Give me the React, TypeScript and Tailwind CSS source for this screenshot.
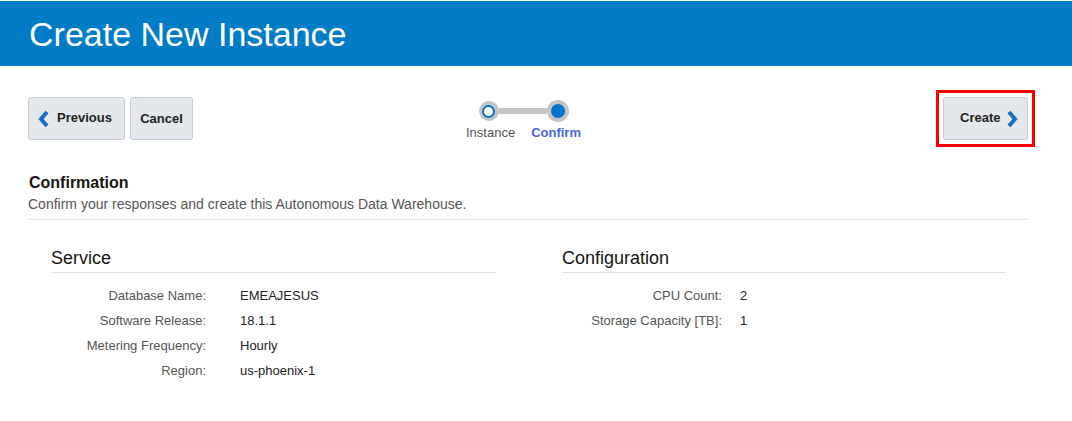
import React from "react";

function ChevLeft() {
  return (
    <svg width="11" height="18" viewBox="0 0 11 18">
      <path d="M9 2 L3 9 L9 16" fill="none" stroke="#1a6fc4" strokeWidth="4" strokeLinejoin="miter" />
    </svg>
  );
}
function ChevRight() {
  return (
    <svg width="11" height="18" viewBox="0 0 11 18">
      <path d="M2 2 L8 9 L2 16" fill="none" stroke="#1a6fc4" strokeWidth="4" strokeLinejoin="miter" />
    </svg>
  );
}

function Row({ label, value, labelW }: { label: string; value: string; labelW: string }) {
  return (
    <div className="flex h-[25px] items-center text-[13px]">
      <div className={`${labelW} text-right text-[#555]`}>{label}</div>
      <div className="text-[#222]">{value}</div>
    </div>
  );
}

export default function App() {
  const btn =
    "flex items-center h-[43px] rounded-[3px] border border-[#c4ced7] bg-[#e4e8ec] text-[13px] font-bold text-[#222]";
  return (
    <div className="w-[1072px] h-[421px] bg-white" style={{ fontFamily: '"Liberation Sans", Arial, sans-serif' }}>
      <div className="pt-px">
        <div className="h-[65px] bg-[#007cc7] flex items-center pl-[29px]">
          <h1 className="text-[34px] text-white leading-none">Create New Instance</h1>
        </div>
      </div>
      <div className="flex items-start mt-[31px] pl-[28px] pr-[37px]">
        <div className="flex gap-[5px] w-[427px]">
          <button className={`${btn} w-[97px] pl-[9px] gap-[8px]`}>
            <ChevLeft />
            <span className="-mt-[2px]">Previous</span>
          </button>
          <button className={`${btn} w-[63px] justify-center`}>Cancel</button>
        </div>
        <div className="flex flex-col items-center ml-[11px]">
          <div className="flex items-center mt-[3px]">
            <div className="w-[20px] h-[20px] rounded-full bg-[#c4c4c4] flex items-center justify-center">
              <div className="w-[13px] h-[13px] rounded-full bg-white border-[2px] border-[#0572ce]" />
            </div>
            <div className="w-[48px] h-[6px] bg-[#c4c4c4]" />
            <div className="w-[22px] h-[22px] rounded-full bg-[#c4c4c4] flex items-center justify-center">
              <div className="w-[14px] h-[14px] rounded-full bg-[#0572ce]" />
            </div>
          </div>
          <div className="flex gap-[16px] mt-[3px] text-[13px] leading-[16px]">
            <span className="text-[#555]">Instance</span>
            <span className="text-[#4a66d6] font-bold">Confirm</span>
          </div>
        </div>
        <div className="flex-1" />
        <div className="-mt-[7px] border-[3px] border-[#f00] px-[4px] py-[4px]">
          <button className={`${btn} w-[85px] pl-[16px] gap-[7px]`}>
            <span className="-mt-[1px]">Create</span>
            <ChevRight />
          </button>
        </div>
      </div>
      <div className="ml-[28px] w-[1000px] mt-[26px]">
        <div className="pl-px text-[16px] font-bold text-[#161513] leading-[19px]">Confirmation</div>
        <div className="text-[14px] text-[#555] mt-[4px] leading-[17px]">
          Confirm your responses and create this Autonomous Data Warehouse.
        </div>
        <div className="h-px bg-[#dfe4e8] mt-[6px]" />
      </div>
      <div className="flex mt-[27px]">
        <div className="ml-[51px] w-[445px]">
          <div className="text-[18px] text-[#161513] leading-[22px] pb-[3px] border-b border-[#dfe4e8]">Service</div>
          <div className="mt-[10px]">
            <Row labelW="w-[189px] pr-[34px]" label="Database Name:" value="EMEAJESUS" />
            <Row labelW="w-[189px] pr-[34px]" label="Software Release:" value="18.1.1" />
            <Row labelW="w-[189px] pr-[34px]" label="Metering Frequency:" value="Hourly" />
            <Row labelW="w-[189px] pr-[34px]" label="Region:" value="us-phoenix-1" />
          </div>
        </div>
        <div className="ml-[66px] w-[444px]">
          <div className="text-[18px] text-[#161513] leading-[22px] pb-[3px] border-b border-[#dfe4e8]">Configuration</div>
          <div className="mt-[10px]">
            <Row labelW="w-[178px] pr-[18px]" label="CPU Count:" value="2" />
            <Row labelW="w-[178px] pr-[18px]" label="Storage Capacity [TB]:" value="1" />
          </div>
        </div>
      </div>
    </div>
  );
}
